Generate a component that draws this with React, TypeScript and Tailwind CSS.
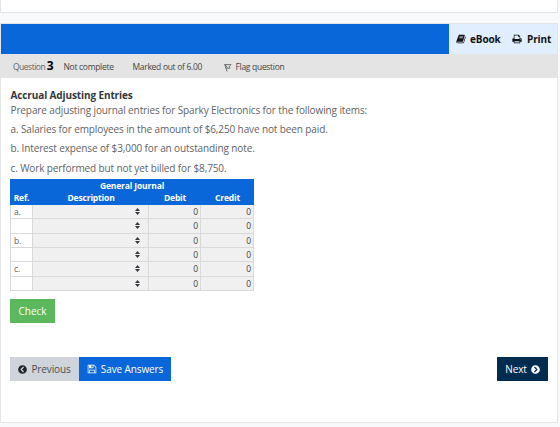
import { FaChevronCircleLeft, FaChevronCircleRight } from 'react-icons/fa'

const items = [
  'a. Salaries for employees in the amount of $6,250 have not been paid.',
  'b. Interest expense of $3,000 for an outstanding note.',
  'c. Work performed but not yet billed for $8,750.',
]

const rows = [
  { ref: 'a.', debit: 0, credit: 0 },
  { ref: '',   debit: 0, credit: 0 },
  { ref: 'b.', debit: 0, credit: 0 },
  { ref: '',   debit: 0, credit: 0 },
  { ref: 'c.', debit: 0, credit: 0 },
  { ref: '',   debit: 0, credit: 0 },
]

function BookIcon() {
  return (
    <svg viewBox="0 0 1792 1792" className="w-[10px] h-[10px] shrink-0" fill="currentColor">
      <path d="M1703 478q40 57 18 129l-275 906q-19 64-76.500 107.500t-122.500 43.500h-923q-77 0-148.500-53.500t-99.500-131.500q-24-67-2-127 0-4 3-27t4-37q1-8-3-21.500t-3-19.500q2-11 8-21t16.500-23.500 16.500-23.500q23-38 45-91.500t30-91.500q3-10 .5-30t-.5-28q3-11 17-28t17-23q21-36 42-92t25-90q1-9-2.500-32t.5-28q4-13 22-30.500t22-22.500q19-26 42.500-84.500t27.500-96.500q1-8-3-25.500t-2-26.500q2-8 9-18t18-23 17-21q8-12 16.500-30.500t15-35 16-36 19.500-32 26.500-23.500 36-11.500 47.500 5.500l-1 3q38-9 51-9h761q74 0 114 56t18 130l-274 906q-36 119-71.500 153.500t-128.500 34.500h-869q-27 0-38 15-11 16-1 43 24 70 144 70h923q29 0 56-15.500t35-41.500l300-987q7-22 5-57 38 15 59 43zm-1064 2q-4 13 2 22.500t20 9.500h608q13 0 25.500-9.500t16.500-22.500l21-64q4-13-2-22.500t-20-9.500h-608q-13 0-25.500 9.500t-16.500 22.500zm-83 256q-4 13 2 22.500t20 9.500h608q13 0 25.500-9.500t16.500-22.500l21-64q4-13-2-22.500t-20-9.500h-608q-13 0-25.500 9.500t-16.500 22.500z" />
    </svg>
  )
}

function PrintIcon() {
  return (
    <svg viewBox="0 0 1792 1792" className="w-[10px] h-[10px] shrink-0" fill="currentColor">
      <path d="M448 1536h896v-256h-896v256zm0-640h896v-384h-160q-40 0-68-28t-28-68v-160h-640v640zm1152 64q0-26-19-45t-45-19-45 19-19 45 19 45 45 19 45-19 19-45zm128 0v416q0 13-9.500 22.500t-22.500 9.500h-224v160q0 40-28 68t-68 28h-960q-40 0-68-28t-28-68v-160h-224q-13 0-22.500-9.500t-9.500-22.500v-416q0-79 56.500-135.500t135.500-56.500h64v-544q0-40 28-68t68-28h672q40 0 88 20t76 48l152 152q28 28 48 76t20 88v256h64q79 0 135.500 56.500t56.500 135.500z" />
    </svg>
  )
}

function SaveIcon() {
  return (
    <svg viewBox="0 0 1792 1792" className="w-[10px] h-[10px] shrink-0" fill="currentColor">
      <path d="M512 1536h768v-384h-768v384zm896 0h128v-896q0-14-10-38.500t-20-34.500l-281-281q-10-10-34-20t-39-10v416q0 40-28 68t-68 28h-576q-40 0-68-28t-28-68v-416h-128v1280h128v-416q0-40 28-68t68-28h832q40 0 68 28t28 68v416zm-384-928v-320q0-13-9.500-22.500t-22.500-9.500h-192q-13 0-22.500 9.500t-9.500 22.500v320q0 13 9.500 22.500t22.500 9.500h192q13 0 22.500-9.500t9.500-22.500zm640 32v928q0 40-28 68t-68 28h-1344q-40 0-68-28t-28-68v-1344q0-40 28-68t68-28h928q40 0 88 20t76 48l280 280q28 28 48 76t20 88z" />
    </svg>
  )
}

function FlagIcon() {
  return (
    <svg viewBox="0 0 8 9" className="w-[8px] h-[9px] shrink-0" fill="none" stroke="#555" strokeWidth="0.8">
      <path d="M0.500 1.500 7 1.700 5.400 3.400 5.800 5.200 2.200 5.300M0.700 1.500 3 8.500" />
      <path d="M1.500 2 3.500 5" />
    </svg>
  )
}

function SortIcon() {
  return (
    <svg viewBox="0 0 5 7" className="w-[5px] h-[7px]" fill="#343a40">
      <path d="M2.500 0 5 2.900H0zM2.500 7 0 4.100h5z" />
    </svg>
  )
}

export default function App() {
  return (
    <div className="w-[560px] h-[427px] bg-[#f8f9fa] overflow-hidden font-['Open_Sans',sans-serif] text-[10px] tracking-[-0.115px] text-[#5f6265]">
      {/* Previous card */}
      <div className="w-[558px] h-[13px] bg-white border-x border-b border-[#e3e5e7]" />

      {/* Question card */}
      <div className="w-[558px] h-[400px] mt-[10px] bg-white border border-[#e3e5e7] flex flex-col">
        <div className="flex h-[30px] shrink-0 bg-[#0a67d9]">
          <div className="flex-1" />
          <div className="w-[108px] pl-[7px] bg-[#e0eeff] flex items-center text-[#111] font-bold">
            <BookIcon />
            <span className="ml-1 w-[42px]">eBook</span>
            <PrintIcon />
            <span className="ml-[5px]">Print</span>
          </div>
        </div>

        <div className="flex items-center h-[24px] shrink-0 bg-[#e4e4e4] pl-3 text-[8.500px] tracking-[-0.300px] text-[#444] whitespace-nowrap">
          <div className="w-[50.500px] pt-0.5 text-[#666] tracking-[-0.500px]">
            Question <span className="text-[12px] leading-none font-bold text-black">3</span>
          </div>
          <div className="w-[69px] pt-0.5">Not complete</div>
          <div className="w-[91px] pt-0.5">Marked out of 6.00</div>
          <div className="flex items-center gap-1 pt-0.5">
            <FlagIcon />
            Flag question
          </div>
        </div>

        <div className="px-[9px] pt-[10px] whitespace-nowrap">
          <div className="pl-[0.500px]">
            <div className="font-bold leading-[15px] text-[#33373b]">Accrual Adjusting Entries</div>
            <div className="leading-[15px]">Prepare adjusting journal entries for Sparky Electronics for the following items:</div>
            {items.map(item => (
              <div key={item} className="mt-[4.200px] leading-[15px]">{item}</div>
            ))}
          </div>

          {/* Journal */}
          <div className="w-[244px] mt-[3.400px] text-[8.500px] tracking-[-0.150px]">
            <div className="h-[26px] pt-px bg-[#0a67d9] text-white font-bold leading-[12px]">
              <div className="text-center">General Journal</div>
              <div className="grid grid-cols-[23px_116px_52px_53px] text-center">
                <div>Ref.</div>
                <div>Description</div>
                <div>Debit</div>
                <div>Credit</div>
              </div>
            </div>
            {rows.map((row, i) => (
              <div
                key={i}
                className="grid grid-rows-1 grid-cols-[22px_116px_52px_53px] h-[14.330px] leading-[13px] border-b border-l border-[#d9d9d9] bg-[#f0f0f0]"
              >
                <div className="bg-white border-r border-[#d9d9d9] pl-[3px]">{row.ref}</div>
                <div className="border-r border-[#d9d9d9] flex items-center justify-end pr-2">
                  <SortIcon />
                </div>
                <div className="border-r border-[#d9d9d9] text-right pr-[2px] text-[#444]">{row.debit}</div>
                <div className="border-r border-[#d9d9d9] text-right pr-[2px] text-[#444]">{row.credit}</div>
              </div>
            ))}
          </div>

          <button className="block mt-[8px] w-[45px] h-[24px] pt-px bg-[#5cb85c] text-white tracking-normal">Check</button>

          <div className="flex mt-[34px] h-[24px]">
            <button className="w-[69px] pt-px bg-[#ced4da] text-[#4a4f54] flex items-center justify-center gap-1">
              <FaChevronCircleLeft className="text-[#212529]" size={9} />
              Previous
            </button>
            <button className="w-[92px] pt-px bg-[#0a67d9] text-white flex items-center justify-center gap-1">
              <SaveIcon />
              Save Answers
            </button>
            <button className="ml-auto w-[51px] pt-px bg-[#002d4f] text-white flex items-center justify-center gap-1">
              Next
              <FaChevronCircleRight size={9} />
            </button>
          </div>
        </div>
      </div>
    </div>
  )
}
